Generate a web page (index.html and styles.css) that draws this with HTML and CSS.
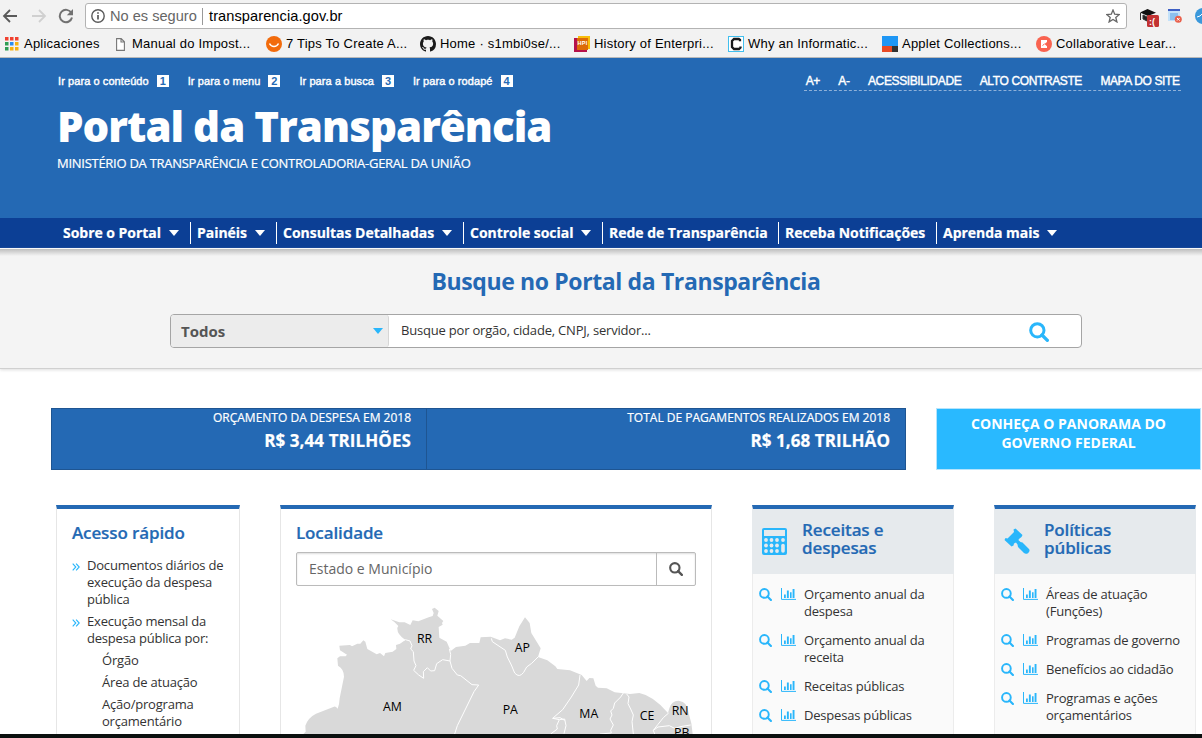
FILE: index.html
```
<!DOCTYPE html>
<html lang="pt-BR">
<head>
<meta charset="utf-8">
<title>Portal da Transparência</title>
<link rel="stylesheet" href="styles.css">
</head>
<body>
<svg width="0" height="0" class="defs">
  <symbol id="search" viewBox="0 0 12 12"><circle cx="5" cy="5" r="4" fill="none" stroke="currentColor" stroke-width="1.8"/><path d="M7.8 7.8L11 11" stroke="currentColor" stroke-width="2" stroke-linecap="round"/></symbol>
  <symbol id="chart" viewBox="0 0 15 12"><path d="M.5 0V11.400H15" fill="none" stroke="currentColor"/><path d="M3 10V6.500h1.800V10zM5.900 10V2.500h1.900V10zM9 10V4.300h1.600V10zM11.600 10V1h1.900v9z" fill="currentColor"/></symbol>
  <symbol id="raquo" viewBox="0 0 8 8"><path d="M.7.7L3.8 4 .7 7.3M4.1.7L7.2 4 4.1 7.3" fill="none" stroke="currentColor" stroke-width="1.1"/></symbol>
</svg>
<div class="browser">
  <div class="toolbar">
    <svg class="ico-back" width="16" height="16" viewBox="0 0 16 16"><path d="M15 8H2M8 2L2 8l6 6" fill="none" stroke="#5a5a5a" stroke-width="1.8"/></svg>
    <svg class="ico-fwd" width="16" height="16" viewBox="0 0 16 16"><path d="M1 8h13M8 2l6 6-6 6" fill="none" stroke="#d0d0d0" stroke-width="1.8"/></svg>
    <svg class="ico-reload" width="16" height="16" viewBox="0 0 16 16"><path d="M13.4 5A6.2 6.2 0 1 0 14 9.500" fill="none" stroke="#727272" stroke-width="2"/><path d="M15 1v6.200H8.800z" fill="#727272"/></svg>
    <div class="address">
      <svg width="14" height="14" viewBox="0 0 14 14"><circle cx="7" cy="7" r="6.2" fill="none" stroke="#5a5a5a" stroke-width="1.4"/><path d="M7 6v4.600M7 3.200v1.600" stroke="#5a5a5a" stroke-width="1.7"/></svg>
      <span class="insecure">No es seguro</span><span class="url">transparencia.gov.br</span>
      <svg class="star" width="14" height="14" viewBox="0 0 14 14"><path d="M7 1l1.700 4.200 4.600.3-3.500 2.900 1.100 4.500L7 10.400l-3.900 2.500 1.100-4.500L.7 5.500l4.600-.3z" fill="none" stroke="#666" stroke-width="1.3"/></svg>
    </div>
    <svg class="ico-grad" width="20" height="20" viewBox="0 0 20 20"><path d="M1 4.500L8.500 1 17 4.700 9 8z" fill="#111"/><path d="M4 7v4l4 2V9zM1.500 5v7" fill="#222" stroke="#333"/><rect x="8" y="7" width="12" height="12" rx="1.5" fill="#c23232"/><text x="10" y="16.500" class="badge">:(</text></svg>
    <svg class="ico-win" width="14" height="14" viewBox="0 0 14 14"><path d="M0 1h12v11H0z" fill="#c4e2fa"/><path d="M0 1h12" stroke="#3e5fc4" stroke-width="2"/><path d="M2 4h8v7H2z" fill="#8cc0ef"/><circle cx="10.3" cy="10.3" r="3.5" fill="#e9604c"/><path d="M9 9l2.600 2.600M11.600 9L9 11.600" stroke="#fff"/></svg>
    <svg class="ico-blue" width="7" height="16" viewBox="0 0 7 16"><circle cx="8" cy="8" r="8" fill="#3a98db"/><path d="M2 9l3-1 2-2" stroke="#fff" fill="none"/></svg>
  </div>
  <div class="bookmarks">
    <div><svg width="14" height="14" viewBox="0 0 14 14"><path d="M0 0h3.500v3.500H0zM5 0h3.500v3.500H5zM10 0h3.500v3.500H10z" fill="#f0412f"/><path d="M0 5h3.500v3.500H0z" fill="#2f9e55"/><path d="M5 5h3.500v3.500H5z" fill="#2a8cf0"/><path d="M10 5h3.500v3.500H10zM5 10h3.500v3.500H5zM10 10h3.500v3.500H10z" fill="#f7b010"/><path d="M0 10h3.500v3.500H0z" fill="#2f9e55"/></svg><span class="t1">Aplicaciones</span></div>
    <div><svg width="9" height="13" viewBox="0 0 9 13"><path d="M.6.6h4.600l3.200 3.200v8.600H.6zM5 .6V4h3.400" fill="#fff" stroke="#777" stroke-width="1.1"/></svg><span class="t2">Manual do Impost...</span></div>
    <div><svg width="16" height="16" viewBox="0 0 16 16"><circle cx="8" cy="8" r="8" fill="#f26b0c"/><path d="M3.500 7.500c2 4 7 4 9 0" fill="none" stroke="#fff" stroke-width="1.5"/></svg><span>7 Tips To Create A...</span></div>
    <div><svg width="16" height="16" viewBox="0 0 16 16"><path fill="#1b1b1b" d="M8 0C3.58 0 0 3.58 0 8c0 3.54 2.29 6.53 5.47 7.59.4.07.55-.17.55-.38 0-.19-.01-.82-.01-1.49-2.01.37-2.53-.49-2.69-.94-.09-.23-.48-.94-.82-1.13-.28-.15-.68-.52-.01-.53.63-.01 1.08.58 1.23.82.72 1.21 1.87.87 2.33.66.07-.52.28-.87.51-1.07-1.78-.2-3.64-.89-3.64-3.95 0-.87.31-1.59.82-2.15-.08-.2-.36-1.02.08-2.12 0 0 .67-.21 2.2.82.64-.18 1.32-.27 2-.27s1.36.09 2 .27c1.53-1.04 2.2-.82 2.2-.82.44 1.1.16 1.92.08 2.12.51.56.82 1.27.82 2.15 0 3.07-1.87 3.75-3.65 3.95.29.25.54.73.54 1.48 0 1.07-.01 1.93-.01 2.2 0 .21.15.46.55.38A8.01 8.01 0 0 0 16 8c0-4.42-3.58-8-8-8z"/></svg><span>Home · s1mbi0se/...</span></div>
    <div><svg width="16" height="16" viewBox="0 0 16 16"><path d="M0 2h13v14H0z" fill="#b5124a"/><path d="M4 0h12v13H4z" fill="#f8be0b"/><path d="M3 2h11v12H3z" fill="#dd6b08"/><text x="3.600" y="9" class="hpi">HPI</text></svg><span>History of Enterpri...</span></div>
    <div><svg width="16" height="16" viewBox="0 0 16 16"><rect x=".5" y=".5" width="15" height="15" fill="#fff" stroke="#41bfee"/><path d="M12 5.200V3.800L10.800 3H6L4 5v6l2 2h5l1.500-1.500V10.500" fill="none" stroke="#17191b" stroke-width="2.3"/></svg><span>Why an Informatic...</span></div>
    <div><svg width="16" height="16" viewBox="0 0 16 16"><path d="M0 0h16v10H0z" fill="#1f97f5"/><path d="M0 10h10v6H0z" fill="#e94b25"/><path d="M10 10h6v6h-6z" fill="#333"/></svg><span>Applet Collections...</span></div>
    <div><svg width="16" height="16" viewBox="0 0 16 16"><circle cx="8" cy="8" r="8" fill="#f96350"/><path d="M5 4h6v2L8.500 8l2.500 2.200V12H5z" fill="#fff"/><path d="M6.500 9.500l2-1.500" stroke="#f96350"/></svg><span>Collaborative Lear...</span></div>
  </div>
</div>

<header class="header">
  <div class="topline">
    <div class="skip">
      <a>Ir para o conteúdo<b>1</b></a><a>Ir para o menu<b>2</b></a><a>Ir para a busca<b>3</b></a><a>Ir para o rodapé<b>4</b></a>
    </div>
    <div class="access"><a>A+</a><a>A-</a><a>ACESSIBILIDADE</a><a>ALTO CONTRASTE</a><a>MAPA DO SITE</a></div>
  </div>
  <h1>Portal da Transparência</h1>
  <p class="ministry">MINISTÉRIO DA TRANSPARÊNCIA E CONTROLADORIA-GERAL DA UNIÃO</p>
</header>
<nav class="nav">
  <a class="drop"><span>Sobre o Portal</span></a><a class="drop"><span>Painéis</span></a><a class="drop"><span>Consultas Detalhadas</span></a><a class="drop"><span>Controle social</span></a><a><span>Rede de Transparência</span></a><a><span>Receba Notificações</span></a><a class="drop"><span>Aprenda mais</span></a>
</nav>
<section class="finder">
  <h2><span>Busque no Portal da Transparência</span></h2>
  <div class="searchbox">
    <div class="select">Todos</div>
    <div class="query">Busque por orgão, cidade, CNPJ, servidor...</div>
    <svg class="go" width="20" height="20"><use href="#search"/></svg>
  </div>
</section>
<section class="numbers">
  <div class="num"><span>ORÇAMENTO DA DESPESA EM 2018</span><strong>R$ 3,44 TRILHÕES</strong></div>
  <div class="num"><span>TOTAL DE PAGAMENTOS REALIZADOS EM 2018</span><strong>R$ 1,68 TRILHÃO</strong></div>
  <a class="panorama">CONHEÇA O PANORAMA DO<br>GOVERNO FEDERAL</a>
</section>
<main class="cards">
  <section class="card quick">
    <h3>Acesso rápido</h3>
    <ul>
      <li><svg width="8" height="8"><use href="#raquo"/></svg>Documentos diários de<br>execução da despesa<br>pública</li>
      <li><svg width="8" height="8"><use href="#raquo"/></svg>Execução mensal da<br>despesa pública por:</li>
      <li class="sub">Órgão</li>
      <li class="sub">Área de atuação</li>
      <li class="sub">Ação/programa<br>orçamentário</li>
    </ul>
  </section>
  <section class="card place">
    <h3>Localidade</h3>
    <div class="field"><span>Estado e Município</span><div class="btn"><svg width="14" height="14"><use href="#search"/></svg></div></div>
    <svg class="map" width="400" height="138" viewBox="78 303 1200 414">
      <path fill="#d9d9d9" d="M100 717L107 710 106 692Q114 668 138 656L190 636Q196 632 203 641 208 630 209 610L222 545Q222 522 204 512L202 490 210 484 227 484 231 479 210 466 208 452 240 450 246 454 262 446 271 446 280 436 286 440 292 462 320 478 330 474 342 484 346 474 368 470 379 462 378 450 390 446 406 435Q380 418 382 398L385 393 374 382 362 373 388 382 404 382 421 390 428 376 445 379 476 367 488 363 491 354 486 342 494 338 506 348 502 362 520 378 516 384 518 389 506 396 508 428 530 440 538 458 542 468 558 456 586 452 600 444 628 444 632 427 662 425 690 436 705 430 725 434 734 428 748 394 765 367 779 384 784 414 812 460 804 486 832 496 856 514 862 522 900 526 935 540 950 558 958 549 970 550 977 572 984 578 1010 580 1034 592 1080 597 1108 594Q1150 602 1194 654L1198 640Q1204 618 1226 617 1254 620 1256 655L1264 685 1268 717Z"/>
      <g fill="none" stroke="#fff" stroke-width="3" stroke-linejoin="round">
        <path d="M390 440L406 434 420 438 426 452 422 462 430 470 432 498 438 512 431 526 446 540 461 550 460 530 472 518 482 528 494 527 500 506 518 494 540 498M538 462L542 478 540 498 546 520 562 540 572 542 606 569 626 570 612 590 562 692 554 717M664 430L667 440 706 466 712 486 724 510 734 534Q748 550 761 532L770 516 785 505 804 486M930 540L926 570 904 606 878 644 848 670 868 674 884 672 888 692 882 716M848 670L870 668 884 676M868 674L860 692 862 702 842 717M1060 594L1052 606 1034 624 1030 640 1022 648 1026 660 1020 672 1030 690 1022 706 1024 714 990 717M1070 597L1077 606 1074 626 1082 642 1090 660 1086 680 1090 717M1196 654L1180 668 1164 688 1150 706 1154 717M1150 706L1164 696 1198 692 1214 700 1236 694 1262 690"/>
      </g>
      <g class="states"><text x="441" y="445">RR</text><text x="734" y="471">AP</text><text x="339" y="648">AM</text><text x="698" y="657">PA</text><text x="928" y="669">MA</text><text x="1109" y="675">CE</text><text x="1205" y="660">RN</text><text x="1212" y="725">PB</text></g>
    </svg>
  </section>
  <section class="card topic">
    <div class="head">
      <svg width="26" height="27" viewBox="0 0 26 27"><rect width="25" height="27" rx="2" fill="#29b6fb"/><path d="M2 2h21v6H2z" fill="#e6eaed"/><g fill="#e6eaed"><circle cx="4" cy="12" r="1.900"/><circle cx="9.500" cy="12" r="1.900"/><circle cx="15" cy="12" r="1.900"/><circle cx="21" cy="12" r="1.900"/><circle cx="4" cy="17.500" r="1.900"/><circle cx="9.500" cy="17.500" r="1.900"/><circle cx="15" cy="17.500" r="1.900"/><circle cx="4" cy="23" r="1.900"/><circle cx="9.500" cy="23" r="1.900"/><circle cx="15" cy="23" r="1.900"/><rect x="19.200" y="15.800" width="3.600" height="9" rx="1.800"/></g></svg>
      <h3>Receitas e<br>despesas</h3>
    </div>
    <ul>
      <li><svg width="13" height="13"><use href="#search"/></svg><svg width="15" height="12"><use href="#chart"/></svg><span>Orçamento anual da<br>despesa</span></li>
      <li><svg width="13" height="13"><use href="#search"/></svg><svg width="15" height="12"><use href="#chart"/></svg><span>Orçamento anual da<br>receita</span></li>
      <li><svg width="13" height="13"><use href="#search"/></svg><svg width="15" height="12"><use href="#chart"/></svg><span>Receitas públicas</span></li>
      <li><svg width="13" height="13"><use href="#search"/></svg><svg width="15" height="12"><use href="#chart"/></svg><span>Despesas públicas</span></li>
    </ul>
  </section>
  <section class="card topic">
    <div class="head">
      <svg width="26" height="27" viewBox="0 0 26 27"><path d="M9.500 1.500L11.500.5 18.500 7 17.500 9 15.500 10.500 14.300 12 16.500 14 18.500 14.500 25 21Q26.500 23 24 25.300 21.500 26.500 20 25L14 19 13.500 16.500 12 14.500 10 15.500 9.500 17.500 7.500 18.500.5 12 1.500 10 3.500 10.500 10 4z" fill="#29b6fb"/></svg>
      <h3>Políticas<br>públicas</h3>
    </div>
    <ul>
      <li><svg width="13" height="13"><use href="#search"/></svg><svg width="15" height="12"><use href="#chart"/></svg><span>Áreas de atuação<br>(Funções)</span></li>
      <li><svg width="13" height="13"><use href="#search"/></svg><svg width="15" height="12"><use href="#chart"/></svg><span>Programas de governo</span></li>
      <li><svg width="13" height="13"><use href="#search"/></svg><svg width="15" height="12"><use href="#chart"/></svg><span>Benefícios ao cidadão</span></li>
      <li><svg width="13" height="13"><use href="#search"/></svg><svg width="15" height="12"><use href="#chart"/></svg><span>Programas e ações<br>orçamentários</span></li>
    </ul>
  </section>
</main>
<div class="desk"></div>
</body>
</html>
```
FILE: styles.css
```
* { box-sizing: border-box; }
html, body { margin: 0; height: 738px; overflow: hidden; }
body { display: flex; flex-direction: column; width: 1202px; background: #fff; color: #333; font: 13px/17px "Open Sans", sans-serif; }
h1, h2, h3, p, ul { margin: 0; padding: 0; }
ul { list-style: none; }
svg { display: block; flex: none; }
a, span { white-space: nowrap; }
.defs { position: absolute; }

.browser { flex: none; height: 58px; background: #f2f2f2; border-bottom: 1px solid #b9b9b9; font-family: "Liberation Sans", sans-serif; color: #000; }
.toolbar { display: flex; align-items: center; height: 31px; padding-left: 2px; }
.ico-fwd { margin-left: 13px; }
.ico-reload { margin-left: 11px; }
.address { display: flex; align-items: center; width: 1042px; height: 26px; margin-left: 11px; padding: 0 6px 0 5px; background: #fff; border: 1px solid #b3b3b3; border-radius: 3px; font-size: 14.6px; }
.insecure { width: 92px; margin-left: 5px; color: #666; }
.url { padding-left: 6px; border-left: 1px solid #999; letter-spacing: .08px; }
.address span { position: relative; top: 1px; }
.star { margin-left: auto; }
.ico-grad { margin: 4px 0 0 12px; }
.badge { font: bold 9px "Liberation Sans", sans-serif; fill: #fff; }
.hpi { font: bold 5.5px "Liberation Sans", sans-serif; fill: #fff; }
.ico-win { margin-left: 9px; }
.ico-blue { margin-left: auto; }
.bookmarks { display: grid; grid-template-columns: 111px 150px 154px 154px 154px 154px 154px 160px; height: 26px; padding-left: 5px; align-items: center; font-size: 13px; letter-spacing: .22px; }
.bookmarks div { display: flex; align-items: center; }
.bookmarks span { margin: -2px 0 0 4px; }
.bookmarks .t1 { margin-left: 5px; }
.bookmarks .t2 { margin-left: 7px; }

.header { flex: none; height: 160px; background: #2469b4; color: #fff; padding: 15px 21px 0 57px; }
.topline { display: flex; justify-content: space-between; height: 18px; font: 11px/16px "Liberation Sans", sans-serif; }
.skip { display: flex; gap: 19px; padding-left: 1px; letter-spacing: .08px; -webkit-text-stroke: .4px #fff; }
.skip b { display: inline-block; width: 12px; height: 12px; margin-left: 8px; background: #fff; color: #2469b4; font-size: 11px; line-height: 12px; text-align: center; -webkit-text-stroke: 0; }
.access { display: flex; gap: 18px; padding: 0 1px 0 2px; border-bottom: 1px dashed #8fb1d8; font-size: 12px; letter-spacing: -.38px; -webkit-text-stroke: .4px #fff; }
.access a { margin-right: .38px; }
h1 { margin-top: 7px; font: 800 42px/56px "Open Sans", sans-serif; letter-spacing: -.98px; }
.ministry { font-size: 13px; line-height: 18px; letter-spacing: -.27px; -webkit-text-stroke: .2px #fff; }

.nav { flex: none; display: grid; grid-template-columns: 133px 86px 187px 139px 176px 158px 160px; height: 31px; padding: 4px 0 0 57px; background: #0c3f95; border-bottom: 1px solid #fff; color: #fff; font-weight: 700; font-size: 14px; letter-spacing: -.03px; -webkit-text-stroke: .2px #fff; }
.nav a { display: flex; align-items: center; height: 22px; padding-left: 6px; border-left: 1px solid #fff; }
.nav a:first-child { border-color: transparent; padding-left: 5px; }
.nav span { margin-top: -2px; }
.drop::after { content: ""; margin-left: 8px; border: 5px solid transparent; border-top: 6px solid #fff; border-bottom: 0; }

.finder { flex: none; height: 120px; padding-top: 18px; background: linear-gradient(#bebebe, #f4f4f4 7px); border-bottom: 1px solid #d0d0d0; box-shadow: 0 1px 3px #ddd; }
.finder h2 { margin-left: 50px; text-align: center; font-size: 23px; line-height: 28px; letter-spacing: -.38px; color: #2469b4; }
.searchbox { display: flex; align-items: center; width: 912px; height: 34px; margin: 19px 0 0 170px; background: #fff; border: 1px solid #a5a5a5; border-radius: 4px; }
.select { display: flex; align-items: center; justify-content: space-between; width: 218px; height: 32px; padding: 0 5px 0 10px; background: #ececec; border-right: 1px solid #d6d6d6; border-radius: 3px; color: #555; font-weight: 700; font-size: 15px; }
.select::after { content: ""; border: 5px solid transparent; border-top: 6px solid #29b6fb; border-bottom: 0; }
.query { margin: -2px 0 0 12px; letter-spacing: -.2px; }
.go { margin: 2px 32px 0 auto; color: #29b6fb; }

.numbers { flex: none; display: flex; height: 62px; margin: 39px 0 0 51px; color: #fff; }
.num { display: flex; flex-direction: column; align-items: flex-end; width: 376px; padding: 0 15px; background: #2469b4; border: 1px solid #1e5592; font-size: 12px; line-height: 18px; -webkit-text-stroke: .2px #fff; }
.num + .num { width: 479px; border-left: 0; }
.num strong { margin-top: 3px; font-size: 17px; line-height: 22px; letter-spacing: .08px; }
.panorama { width: 265px; margin-left: 30px; padding-top: 5px; background: #29b9ff; border: 1px solid #b5e4fc; text-align: center; font-weight: 700; font-size: 14px; line-height: 19px; }

.cards { flex: none; display: flex; height: 229px; margin: 35px 0 0 56px; overflow: hidden; letter-spacing: -.2px; }
.card { height: 400px; border: 1px solid #e6e6e6; border-top: 4px solid #2469b4; }
.card h3 { color: #2469b4; font-weight: 600; font-size: 17px; line-height: 24px; letter-spacing: -.12px; -webkit-text-stroke: .2px #2469b4; }
.quick { width: 184px; padding: 12px 0 0 15px; }
.quick ul { margin-top: 12px; }
.quick li { position: relative; padding-left: 15px; margin-bottom: 5px; }
.quick li svg { position: absolute; left: 0; top: 6px; color: #29b6fb; }
.quick li.sub { padding-left: 30px; }
.place { width: 432px; margin-left: 40px; padding: 12px 0 0 15px; }
.field { display: flex; width: 400px; height: 34px; margin-top: 7px; border: 1px solid #bbb; border-radius: 2px; box-shadow: inset 0 1px 2px #ddd; color: #666; font-size: 14px; line-height: 32px; letter-spacing: 0; padding-left: 12px; }
.btn { display: flex; align-items: center; justify-content: center; width: 39px; margin-left: auto; border-left: 1px solid #bbb; color: #555; }
.map { margin-top: 10px; }
.states { font: 37px "Open Sans", sans-serif; fill: #000; letter-spacing: 0; }
.topic { width: 202px; margin-left: 40px; background: #fafafa; border-color: #2469b4 #ececec #ececec; }
.head { display: flex; height: 65px; margin: 0 -1px; padding: 12px 0 0 10px; background: #e6eaed; }
.head h3 { margin: 0 0 0 14px; line-height: 18px; }
.head svg { margin-top: 7px; }
.topic ul { padding: 12px 0 0 6px; }
.topic li { display: flex; margin-bottom: 12px; }
.topic li svg { margin-top: 2px; margin-right: 9px; color: #29b6fb; }
.topic li svg + svg { margin-right: 8px; }
.desk { flex: none; height: 4px; background: #0b100f; }
```
